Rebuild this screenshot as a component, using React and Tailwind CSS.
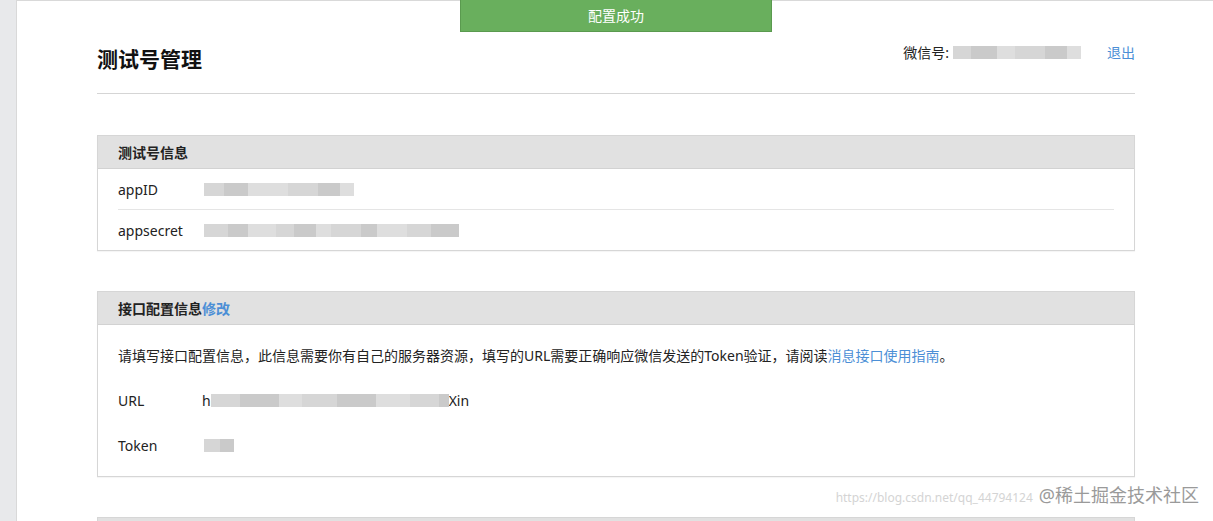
import React from 'react';

const FONT = { fontFamily: '"Noto Sans", "Noto Sans CJK SC", sans-serif' };

// blurred-out secret value, drawn as a strip of grey blocks
const Masked = ({ widths, className = '' }) => (
  <div className={`flex h-[13px] blur-[0.6px] ${className}`}>
    {widths.map((w, i) => (
      <div
        key={i}
        className={i % 3 === 0 ? 'bg-[#d6d6d6]' : i % 3 === 1 ? 'bg-[#cacaca]' : 'bg-[#dedede]'}
        style={{ width: w }}
      />
    ))}
  </div>
);

const Panel = ({ title, children }) => (
  <div className="border border-[#d6d6d6] bg-white shadow-[0_1px_1px_rgba(0,0,0,0.04)]">
    <div className="h-[33px] bg-[#e1e1e1] border-b border-[#d2d2d2] px-[20px] flex items-center text-[14px] font-bold text-[#222]">
      {title}
    </div>
    {children}
  </div>
);

const App = () => {
  return (
    <div className="relative w-[1213px] h-[521px] overflow-hidden flex bg-white text-[#222]" style={FONT}>
      {/* left grey strip */}
      <div className="w-[16px] bg-[#e8e9eb] shrink-0" />

      <div className="flex-1 border-t border-l border-[#d9d9d9] bg-white">
        <div className="ml-[80px] w-[1038px]">
          {/* Header */}
          <div className="h-[93px] border-b border-[#d5d5d5] flex justify-between">
            <h1 className="pt-[43px] text-[21px] leading-[30px] font-bold text-[#111]">测试号管理</h1>
            <div className="pt-[41px] flex items-center h-[62px] text-[14px] leading-[20px]">
              <span>微信号:</span>
              <Masked widths={[18, 26, 18, 30, 22, 14]} className="ml-[4px] w-[128px]" />
              <a className="ml-[26px] text-[#4c8fd6]">退出</a>
            </div>
          </div>

          {/* 测试号信息 */}
          <div className="mt-[41px]">
            <Panel title="测试号信息">
              <div className="px-[20px] text-[14px]">
                <div className="h-[41px] flex items-center border-b border-[#e5e5e5]">
                  <span className="w-[86px]">appID</span>
                  <Masked widths={[20, 24, 40, 30, 22, 14]} className="w-[150px]" />
                </div>
                <div className="h-[40px] flex items-center">
                  <span className="w-[86px]">appsecret</span>
                  <Masked widths={[24, 20, 28, 18, 22, 16, 30, 16, 30, 24, 28]} className="w-[255px]" />
                </div>
              </div>
            </Panel>
          </div>

          {/* 接口配置信息 */}
          <div className="mt-[40px]">
            <Panel title={<>接口配置信息<span className="text-[#4c8fd6]">修改</span></>}>
              <div className="px-[20px] pt-[20px] pb-[20px] text-[14px]">
                <p className="leading-[22px]">
                  请填写接口配置信息，此信息需要你有自己的服务器资源，填写的URL需要正确响应微信发送的Token验证，请阅读
                  <a className="text-[#4c8fd6]">消息接口使用指南</a>。
                </p>
                <div className="mt-[22px] h-[22px] flex items-center">
                  <span className="w-[84px]">URL</span>
                  <span>h</span>
                  <Masked widths={[30, 40, 24, 36, 40, 34, 30, 10]} className="w-[238px]" />
                  <span>Xin</span>
                </div>
                <div className="mt-[23px] h-[22px] flex items-center">
                  <span className="w-[86px]">Token</span>
                  <Masked widths={[16, 14]} className="w-[30px]" />
                </div>
              </div>
            </Panel>
          </div>

          {/* next panel peeking */}
          <div className="mt-[40px] h-[40px] border border-[#d6d6d6] bg-[#e1e1e1]" />
        </div>
      </div>

      {/* success toast */}
      <div className="absolute left-[460px] top-0 w-[312px] h-[32px] bg-[#69af5d] border border-t-0 border-[#5a9a4f] flex items-center justify-center text-white text-[14px]">
        配置成功
      </div>

      {/* watermark */}
      <div className="absolute right-[14px] bottom-[14px] flex items-end pointer-events-none">
        <span className="text-[12px] leading-[16px] text-[#d4d4d4] mr-[6px] mb-[1px]">https://blog.csdn.net/qq_44794124</span>
        <span className="text-[18px] leading-[24px] text-[#9a9a9a]">@稀土掘金技术社区</span>
      </div>
    </div>
  );
};

export default App;
